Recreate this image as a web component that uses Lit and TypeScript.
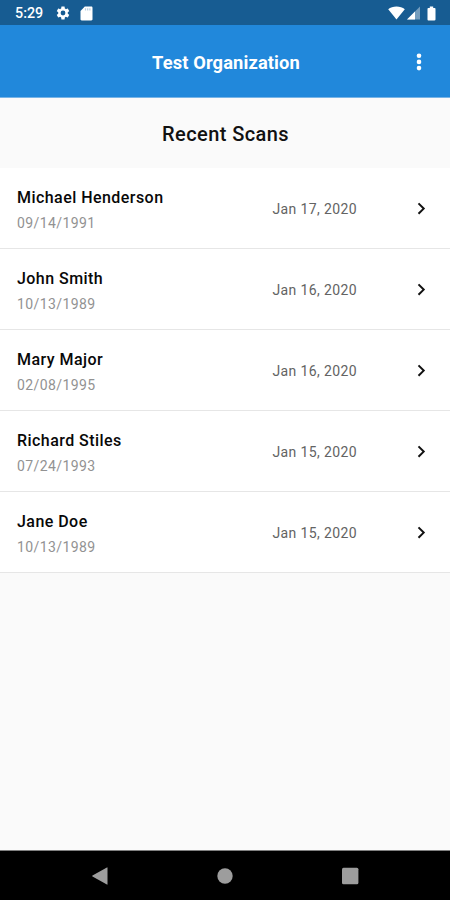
import { LitElement, html, css, svg } from "lit";
import { customElement, property } from "lit/decorators.js";

interface Scan {
  name: string;
  born: string;
  scanned: string;
}

const SCANS: Scan[] = [
  { name: "Michael Henderson", born: "09/14/1991", scanned: "Jan 17, 2020" },
  { name: "John Smith", born: "10/13/1989", scanned: "Jan 16, 2020" },
  { name: "Mary Major", born: "02/08/1995", scanned: "Jan 16, 2020" },
  { name: "Richard Stiles", born: "07/24/1993", scanned: "Jan 15, 2020" },
  { name: "Jane Doe", born: "10/13/1989", scanned: "Jan 15, 2020" },
];

const GEAR =
  "M19.14 12.94c.04-.3.06-.61.06-.94s-.02-.64-.07-.94l2.03-1.58c.18-.14.23-.41.12-.61l-1.92-3.32c-.12-.22-.37-.29-.59-.22l-2.39.96c-.5-.38-1.03-.7-1.62-.94l-.36-2.54c-.04-.24-.24-.41-.48-.41h-3.84c-.24 0-.43.17-.47.41l-.36 2.54c-.59.24-1.13.57-1.62.94l-2.39-.96c-.22-.08-.47 0-.59.22L2.74 8.87c-.12.21-.08.47.12.61l2.03 1.58c-.05.3-.09.63-.09.94s.02.64.07.94l-2.03 1.58c-.18.14-.23.41-.12.61l1.92 3.32c.12.22.37.29.59.22l2.39-.96c.5.38 1.03.7 1.62.94l.36 2.54c.05.24.24.41.48.41h3.84c.24 0 .44-.17.47-.41l.36-2.54c.59-.24 1.13-.56 1.62-.94l2.39.96c.22.08.47 0 .59-.22l1.92-3.32c.12-.22.07-.47-.12-.61zM12 15.6A3.6 3.6 0 1 1 12 8.4a3.6 3.6 0 0 1 0 7.2z";

@customElement("status-bar")
export class StatusBar extends LitElement {
  static styles = css`
    :host {
      display: flex;
      align-items: center;
      height: 25px;
      box-sizing: border-box;
      padding: 1px 14px 0 15px;
      background: #175c92;
      color: #fff;
    }
    .time {
      width: 40px;
      font: 500 14.3px/24px Roboto, sans-serif;
    }
    svg {
      display: block;
      fill: currentColor;
    }
    .card {
      margin-left: 8.500px;
    }
    .wifi {
      margin-left: auto;
    }
    .signal {
      margin-left: 2px;
    }
    .battery {
      margin-left: 7px;
    }
  `;

  render() {
    return html`
      <span class="time">5:29</span>
      <svg width="16" height="16" viewBox="0 0 24 24"><path d=${GEAR} /></svg>
      <svg class="card" width="13" height="15" viewBox="0 0 13 15">
        <path d="M4.8.6h6.5c.7 0 1.2.5 1.2 1.2v11.4c0 .7-.5 1.2-1.2 1.2H1.7c-.7 0-1.2-.5-1.2-1.2V5z" />
        <path d="M4.9 2.2h1.2v2.4H4.9zM7.1 2.2h1.2v2.4H7.1zM9.3 2.2h1.2v2.4H9.3z" fill="#b9cfe0" />
      </svg>
      <svg class="wifi" width="17" height="14" viewBox="0 0 17 14">
        <path d="M8.5 13.6.2 3.2C2.4 1.4 5.2.4 8.5.4s6.1 1 8.3 2.8z" />
      </svg>
      <svg class="signal" width="13" height="14" viewBox="0 0 13 14">
        <path d="M13 .4v13.2H0z" fill="#749dbe" />
        <path d="M8 5.5v8.1H0z" />
      </svg>
      <svg class="battery" width="9" height="15" viewBox="0 0 9 15">
        <path d="M2.8.4h3.4v1.5h1.4c.5 0 .9.4.9.9v10.7c0 .5-.4.9-.9.9H1.4a.9.9 0 0 1-.9-.9V2.8c0-.5.4-.9.9-.9h1.4z" />
      </svg>
    `;
  }
}

@customElement("app-bar")
export class AppBar extends LitElement {
  static styles = css`
    :host {
      display: grid;
      grid-template-columns: 48px 1fr 48px;
      align-items: center;
      height: 73px;
      box-sizing: border-box;
      padding: 1px 7px 0 9px;
      background: #2188db;
      border-bottom: 1px solid #78b4e6;
      color: #fff;
    }
    .title {
      grid-column: 2;
      padding-top: 2px;
      text-align: center;
      font: 700 18.3px/24px Roboto, sans-serif;
      letter-spacing: 0.13px;
      white-space: nowrap;
    }
    .more {
      display: block;
      justify-self: center;
      fill: currentColor;
    }
  `;
  @property() heading = "";

  render() {
    return html`
      <span class="title">${this.heading}</span>
      <svg class="more" width="6" height="20" viewBox="0 0 6 20">
        ${[3.7, 9.9, 16.1].map((y) => svg`<circle cx="3" cy=${y} r="2.3" />`)}
      </svg>
    `;
  }
}

@customElement("scan-row")
export class ScanRow extends LitElement {
  static styles = css`
    :host {
      display: grid;
      grid-template-columns: 255px 1fr 10px;
      align-items: center;
      height: 81px;
      box-sizing: border-box;
      padding: 1px 24px 0 17px;
      background: #fff;
      border-bottom: 1px solid #e6e6e6;
      font-family: Roboto, sans-serif;
    }
    .person {
      display: flex;
      flex-direction: column;
      gap: 3px;
      padding-top: 4px;
    }
    .name {
      font-size: 16px;
      line-height: 22px;
      font-weight: 500;
      letter-spacing: 0.45px;
      color: #080808;
    }
    .born {
      font-size: 14px;
      line-height: 22px;
      letter-spacing: 0.4px;
      color: #929292;
    }
    .scanned {
      font-size: 14px;
      line-height: 22px;
      letter-spacing: 0.37px;
      padding-left: 0.5px;
      color: #636363;
    }
    .chevron {
      display: block;
      fill: none;
      stroke: #111;
      stroke-width: 2;
    }
  `;
  @property({ attribute: false }) scan!: Scan;

  render() {
    return html`
      <div class="person">
        <span class="name">${this.scan.name}</span>
        <span class="born">${this.scan.born}</span>
      </div>
      <span class="scanned">${this.scan.scanned}</span>
      <svg class="chevron" width="10" height="14" viewBox="0 0 10 14">
        <path d="M2.5 1.4 7.7 6.6l-5.2 5.2" />
      </svg>
    `;
  }
}

@customElement("nav-bar")
export class NavBar extends LitElement {
  static styles = css`
    :host {
      display: grid;
      grid-template-columns: repeat(3, 125px);
      justify-content: center;
      align-items: center;
      justify-items: center;
      height: 50px;
      box-sizing: border-box;
      background: #000;
      border-top: 1px solid #808080;
    }
    svg {
      display: block;
      fill: #9d9d9d;
    }
  `;

  render() {
    return html`
      <svg width="18" height="18" viewBox="0 0 18 18"><path d="M16.5.7v16.6q0 .6-.6.3L1.500 9.600q-.8-.6 0-1.200L15.900.4q.6-.3.600.3z" /></svg>
      <svg width="18" height="18" viewBox="0 0 18 18"><circle cx="9" cy="9" r="7.7" /></svg>
      <svg width="18" height="18" viewBox="0 0 18 18"><rect x="1" y=".8" width="16.4" height="16.4" rx="1.5" /></svg>
    `;
  }
}

@customElement("app-root")
export class AppRoot extends LitElement {
  static styles = css`
    :host {
      display: flex;
      flex-direction: column;
      height: 900px;
      background: #fafafa;
    }
    .section {
      margin: 0;
      height: 70px;
      box-sizing: border-box;
      padding: 1px 0 0 1px;
      text-align: center;
      font: 500 20px/70px Roboto, sans-serif;
      letter-spacing: 0.4px;
      color: #111;
    }
    .list {
      flex: 1;
    }
  `;

  render() {
    return html`
      <status-bar></status-bar>
      <app-bar heading="Test Organization"></app-bar>
      <h1 class="section">Recent Scans</h1>
      <main class="list">${SCANS.map((scan) => html`<scan-row .scan=${scan}></scan-row>`)}</main>
      <nav-bar></nav-bar>
    `;
  }
}
